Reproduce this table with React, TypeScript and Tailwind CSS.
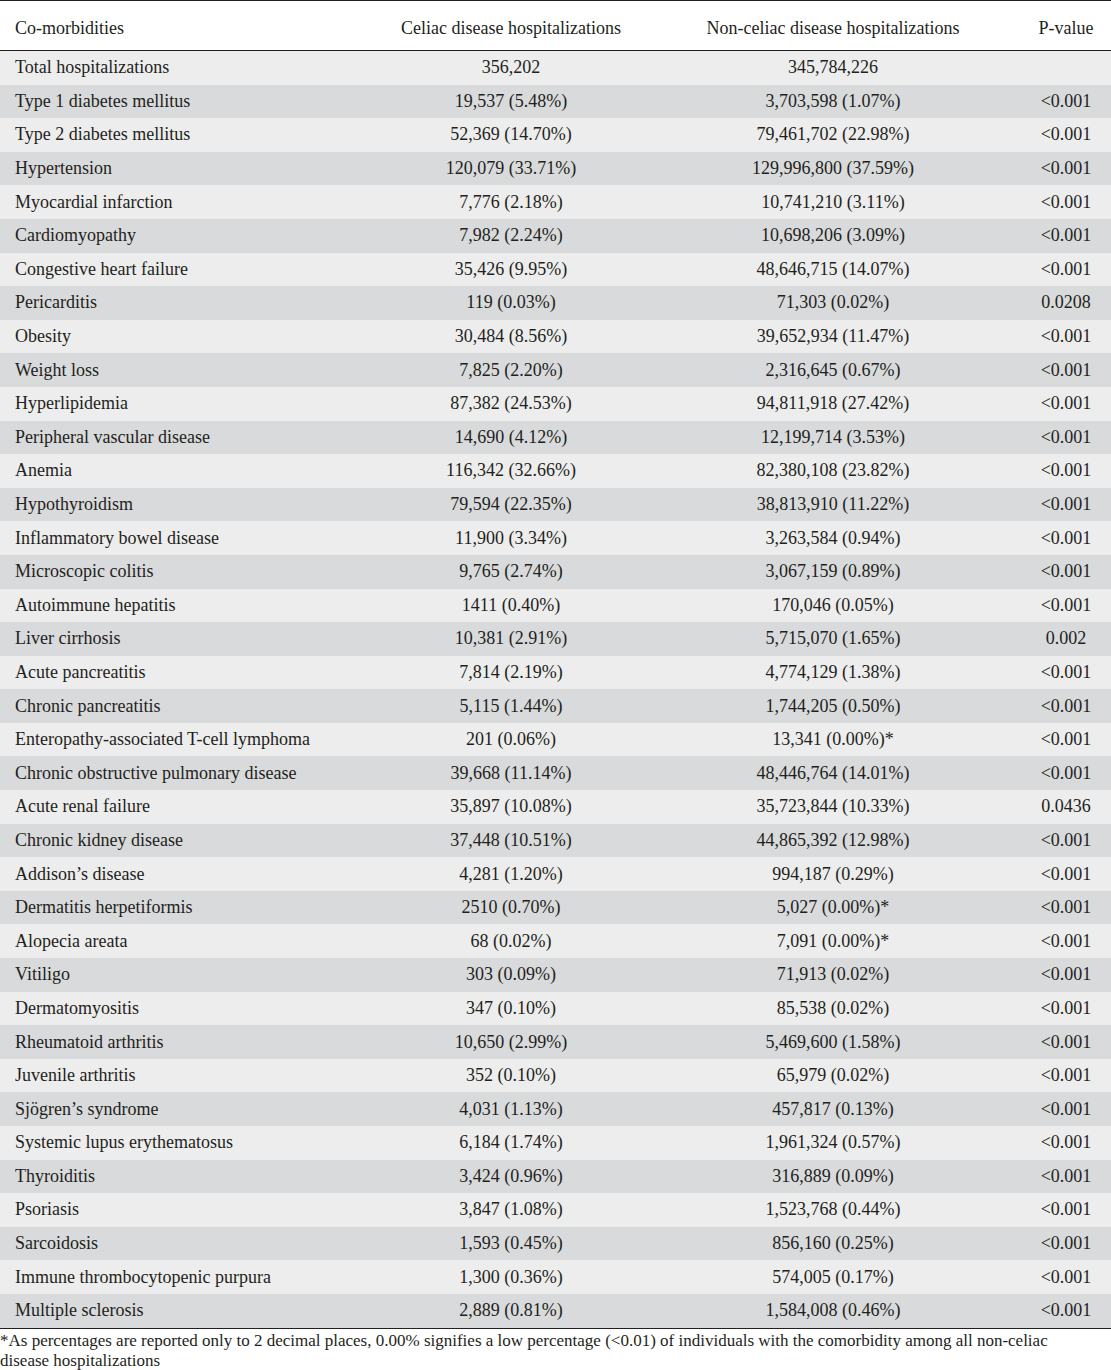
const rows: [string, string, string, string][] = [
  ["Total hospitalizations", "356,202", "345,784,226", ""],
  ["Type 1 diabetes mellitus", "19,537 (5.48%)", "3,703,598 (1.07%)", "<0.001"],
  ["Type 2 diabetes mellitus", "52,369 (14.70%)", "79,461,702 (22.98%)", "<0.001"],
  ["Hypertension", "120,079 (33.71%)", "129,996,800 (37.59%)", "<0.001"],
  ["Myocardial infarction", "7,776 (2.18%)", "10,741,210 (3.11%)", "<0.001"],
  ["Cardiomyopathy", "7,982 (2.24%)", "10,698,206 (3.09%)", "<0.001"],
  ["Congestive heart failure", "35,426 (9.95%)", "48,646,715 (14.07%)", "<0.001"],
  ["Pericarditis", "119 (0.03%)", "71,303 (0.02%)", "0.0208"],
  ["Obesity", "30,484 (8.56%)", "39,652,934 (11.47%)", "<0.001"],
  ["Weight loss", "7,825 (2.20%)", "2,316,645 (0.67%)", "<0.001"],
  ["Hyperlipidemia", "87,382 (24.53%)", "94,811,918 (27.42%)", "<0.001"],
  ["Peripheral vascular disease", "14,690 (4.12%)", "12,199,714 (3.53%)", "<0.001"],
  ["Anemia", "116,342 (32.66%)", "82,380,108 (23.82%)", "<0.001"],
  ["Hypothyroidism", "79,594 (22.35%)", "38,813,910 (11.22%)", "<0.001"],
  ["Inflammatory bowel disease", "11,900 (3.34%)", "3,263,584 (0.94%)", "<0.001"],
  ["Microscopic colitis", "9,765 (2.74%)", "3,067,159 (0.89%)", "<0.001"],
  ["Autoimmune hepatitis", "1411 (0.40%)", "170,046 (0.05%)", "<0.001"],
  ["Liver cirrhosis", "10,381 (2.91%)", "5,715,070 (1.65%)", "0.002"],
  ["Acute pancreatitis", "7,814 (2.19%)", "4,774,129 (1.38%)", "<0.001"],
  ["Chronic pancreatitis", "5,115 (1.44%)", "1,744,205 (0.50%)", "<0.001"],
  ["Enteropathy-associated T-cell lymphoma", "201 (0.06%)", "13,341 (0.00%)*", "<0.001"],
  ["Chronic obstructive pulmonary disease", "39,668 (11.14%)", "48,446,764 (14.01%)", "<0.001"],
  ["Acute renal failure", "35,897 (10.08%)", "35,723,844 (10.33%)", "0.0436"],
  ["Chronic kidney disease", "37,448 (10.51%)", "44,865,392 (12.98%)", "<0.001"],
  ["Addison’s disease", "4,281 (1.20%)", "994,187 (0.29%)", "<0.001"],
  ["Dermatitis herpetiformis", "2510 (0.70%)", "5,027 (0.00%)*", "<0.001"],
  ["Alopecia areata", "68 (0.02%)", "7,091 (0.00%)*", "<0.001"],
  ["Vitiligo", "303 (0.09%)", "71,913 (0.02%)", "<0.001"],
  ["Dermatomyositis", "347 (0.10%)", "85,538 (0.02%)", "<0.001"],
  ["Rheumatoid arthritis", "10,650 (2.99%)", "5,469,600 (1.58%)", "<0.001"],
  ["Juvenile arthritis", "352 (0.10%)", "65,979 (0.02%)", "<0.001"],
  ["Sjögren’s syndrome", "4,031 (1.13%)", "457,817 (0.13%)", "<0.001"],
  ["Systemic lupus erythematosus", "6,184 (1.74%)", "1,961,324 (0.57%)", "<0.001"],
  ["Thyroiditis", "3,424 (0.96%)", "316,889 (0.09%)", "<0.001"],
  ["Psoriasis", "3,847 (1.08%)", "1,523,768 (0.44%)", "<0.001"],
  ["Sarcoidosis", "1,593 (0.45%)", "856,160 (0.25%)", "<0.001"],
  ["Immune thrombocytopenic purpura", "1,300 (0.36%)", "574,005 (0.17%)", "<0.001"],
  ["Multiple sclerosis", "2,889 (0.81%)", "1,584,008 (0.46%)", "<0.001"],
];

export default function App() {
  return (
    <main className="w-[1111px] bg-white text-[#231f20] font-['Liberation_Serif',serif]">
      <div className="border-t border-[#231f20]">
        {/* Header */}
        <div className="grid grid-cols-[391px_240px_404px_1fr] h-[50px] pt-[5px] items-center border-b-[1.5px] border-[#231f20] text-[18px]">
          <div className="pl-[15px]">Co-morbidities</div>
          <div className="text-center">Celiac disease hospitalizations</div>
          <div className="text-center">Non-celiac disease hospitalizations</div>
          <div className="text-center pr-[14px]">P-value</div>
        </div>

        {/* Rows */}
        {rows.map((r, i) => (
          <div
            key={r[0]}
            className={
              "grid grid-cols-[391px_240px_404px_1fr] h-[33.6px] items-center text-[18px] " +
              (i % 2 === 0 ? "bg-[#ededed]" : "bg-[#d9dadb]")
            }
          >
            <div className="pl-[15px] whitespace-nowrap">{r[0]}</div>
            <div className="text-center">{r[1]}</div>
            <div className="text-center">{r[2]}</div>
            <div className="text-center pr-[14px]">{r[3]}</div>
          </div>
        ))}
      </div>

      {/* Footnote */}
      <p className="border-t-[1.5px] border-[#231f20] pt-[2px] pr-[40px] text-[17px] leading-[20px]">
        *As percentages are reported only to 2 decimal places, 0.00% signifies a low percentage (&lt;0.01) of individuals with the comorbidity among all non-celiac disease hospitalizations
      </p>
    </main>
  );
}
